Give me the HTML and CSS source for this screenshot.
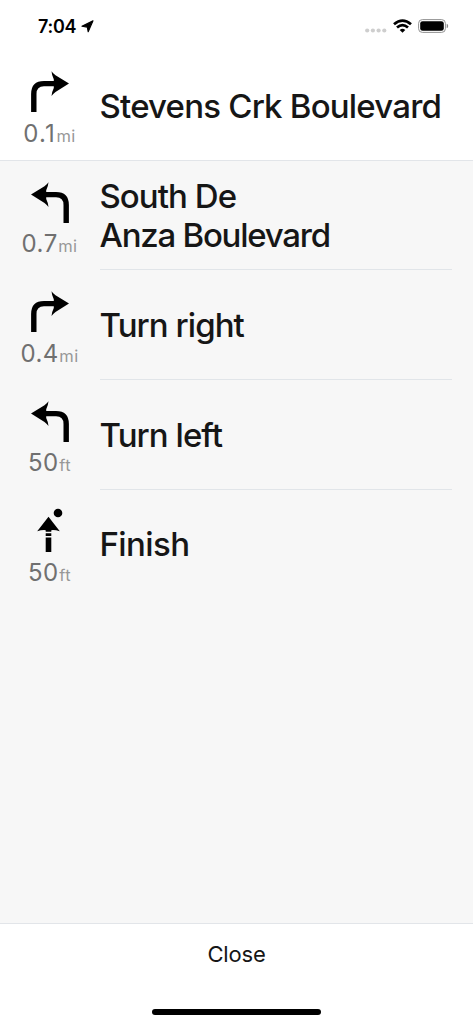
FILE: index.html
```html
<!DOCTYPE html>
<html lang="en">
<head>
<meta charset="utf-8">
<title>Directions</title>
<link rel="stylesheet" href="styles.css">
</head>
<body>
<svg class="defs" aria-hidden="true">
  <symbol id="turn" viewBox="0 0 38 42">
    <path d="M2.8 41V23Q2.8 12.6 13 12.6H25" fill="none" stroke="#000" stroke-width="5.4"/>
    <path d="M20.5 0.2Q22 2.4 24.5 4.2L38 12.6L24.5 21Q22 22.8 20.5 25Q20.8 21 22.8 17V8.2Q20.8 4.2 20.5 .2Z"/>
  </symbol>
</svg>
<main class="screen">
  <header class="status">
    <span class="time">7:04</span>
    <svg class="locate" viewBox="0 0 13 13"><path d="M12 .8L7.2 11.8L6.3 7.1L.9 6.2Z" stroke="#000" stroke-width="1.1" stroke-linejoin="round"/></svg>
    <svg class="signal" viewBox="0 0 22 5" fill="#cecece"><circle cx="2.2" cy="2.5" r="2.1"/><circle cx="7.9" cy="2.5" r="2.1"/><circle cx="13.6" cy="2.5" r="2.1"/><circle cx="19.3" cy="2.5" r="2.1"/></svg>
    <svg class="wifi" viewBox="0 0 19 14" fill="none" stroke="#000"><path d="M1 5.2Q9.5-2 18 5.2M4 8.5Q9.5 3.8 15 8.5" stroke-width="2.8"/><path d="M6.7 11Q9.5 8.7 12.3 11L9.5 13.8Z" fill="#000" stroke="none"/></svg>
    <svg class="battery" viewBox="0 0 31 14"><rect x=".6" y=".6" width="26.8" height="12.8" rx="3.7" fill="none" stroke="#929292"/><rect x="2.2" y="2.2" width="23.6" height="9.6" rx="2.4"/><path d="M28.7 4.8Q30.2 5.3 30.2 7T28.7 9.2Z" fill="#888"/></svg>
  </header>
  <section class="step current">
    <div class="move"><svg class="arrow"><use href="#turn"/></svg><p class="distance wide">0.1<small>mi</small></p></div>
    <h1 class="street crk">Stevens Crk Boulevard</h1>
  </section>
  <section class="list">
    <div class="step">
      <div class="move"><svg class="arrow left"><use href="#turn"/></svg><p class="distance">0.7<small>mi</small></p></div>
      <h2 class="street"><span>South De</span><span class="anza">Anza Boulevard</span></h2>
    </div>
    <div class="step">
      <div class="move"><svg class="arrow"><use href="#turn"/></svg><p class="distance">0.4<small>mi</small></p></div>
      <h2 class="street">Turn right</h2>
    </div>
    <div class="step">
      <div class="move"><svg class="arrow left"><use href="#turn"/></svg><p class="distance">50<small>ft</small></p></div>
      <h2 class="street">Turn left</h2>
    </div>
    <div class="step">
      <div class="move"><svg class="arrow" viewBox="0 0 38 42"><circle cx="27" cy="2" r="4.3"/><path d="M17.5 5.7L28.8 20.3Q24 18.8 20.3 19.2V20.8H14.7V19.2Q11 18.8 6.2 20.3ZM14.7 22.3H20.3V25H14.7ZM14.7 26.5H20.3V41H14.7Z"/></svg><p class="distance">50<small>ft</small></p></div>
      <h2 class="street finish">Finish</h2>
    </div>
  </section>
  <footer class="footer">
    <button class="close">Close</button>
    <div class="home"></div>
  </footer>
</main>
</body>
</html>
```
FILE: styles.css
```css
* { box-sizing: border-box; }
body {
  margin: 0;
  background: #fff;
  color: #161616;
  font-family: Inter, "Liberation Sans", sans-serif;
}
.defs { display: none; }
.screen {
  display: flex;
  flex-direction: column;
  height: 1024px;
  width: 473px;
}
.status {
  display: flex;
  align-items: center;
  height: 50px;
  padding: 2px 25px 0 38px;
  flex: none;
}
.time {
  width: 39px;
  font-size: 18px;
  font-weight: 600;
  letter-spacing: -0.3px;
  color: #000;
}
.locate { width: 13px; height: 13px; margin-left: 3.5px; }
.signal { width: 22px; height: 5px; margin: 9px 6px 0 auto; }
.wifi { width: 19px; height: 14px; margin-right: 6px; }
.battery { width: 31px; height: 14px; margin-right: -1px; }
.step {
  display: flex;
  height: 109.65px;
  flex: none;
}
.current { height: 109.6px; }
.move {
  width: 99px;
  display: flex;
  flex-direction: column;
  align-items: center;
  padding-top: 21px;
}
.arrow { width: 38px; height: 42px; overflow: visible; flex: none; }
.left { transform: scaleX(-1); }
.distance {
  margin: 5.5px 0 0;
  font-size: 24px;
  line-height: 30px;
  letter-spacing: 0.5px;
  color: #707070;
  white-space: nowrap;
}
.wide { letter-spacing: 1.2px; }
.distance small {
  font-size: 16.5px;
  letter-spacing: 0.4px;
  color: #979797;
  margin-left: 0.5px;
}
.street {
  display: flex;
  flex: 1;
  align-items: center;
  margin: 0 21px 0 0.5px;
  padding-top: 3px;
  font-size: 33px;
  font-weight: 500;
  line-height: 39.6px;
  letter-spacing: -0.95px;
  white-space: nowrap;
}
.crk { letter-spacing: -0.8px; }
.anza { letter-spacing: -1.25px; }
.list .street { display: grid; align-content: center; border-bottom: 1px solid #e1e5e9; }
.list .finish { border-bottom: 0; padding-top: 1px; letter-spacing: -0.6px; }
.list {
  flex: 1;
  background: #f7f7f7;
  border-top: 1px solid #e2e5e9;
  border-bottom: 1px solid #e2e5e9;
}
.footer {
  display: flex;
  flex-direction: column;
  align-items: center;
  justify-content: space-between;
  height: 100px;
  padding: 15px 0 9px;
  flex: none;
}
.close {
  border: 0;
  padding: 0;
  background: none;
  font: 400 22px/30px Inter, sans-serif;
  letter-spacing: -0.2px;
  color: #161616;
}
.home { width: 169px; height: 6px; border-radius: 3px; background: #000; }
```
